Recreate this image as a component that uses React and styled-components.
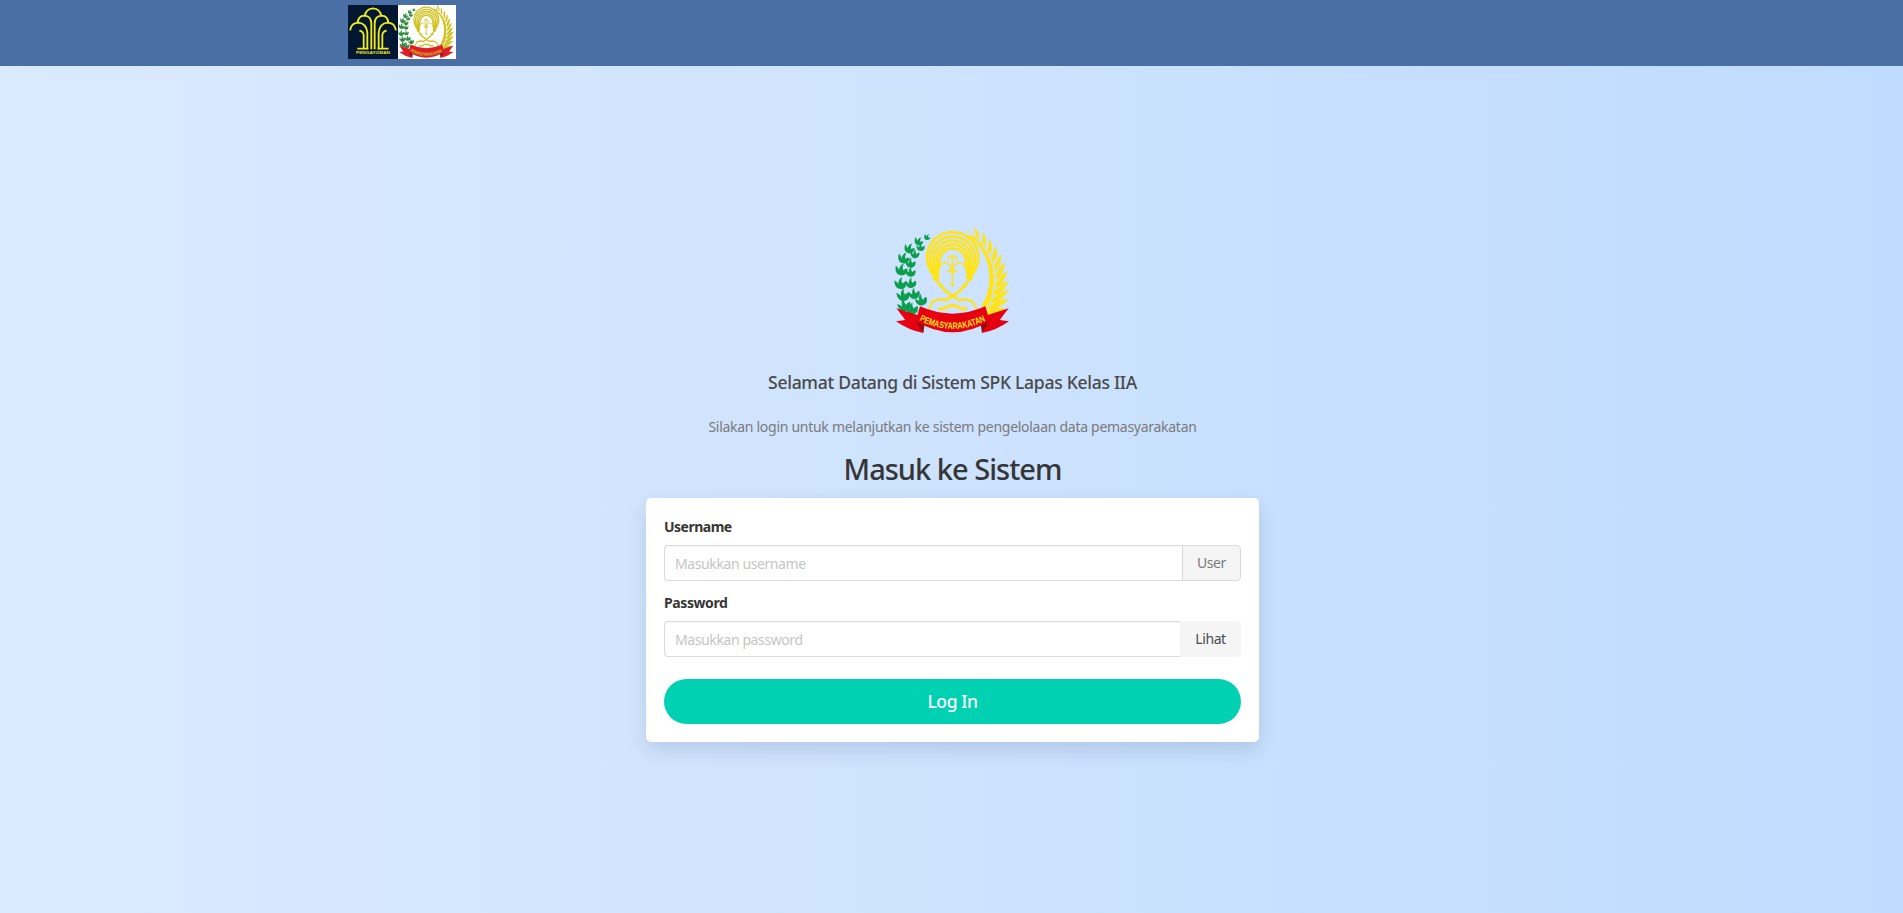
import React, { useState } from "react";
import styled, { createGlobalStyle } from "styled-components";

const GlobalStyle = createGlobalStyle`
  *, *::before, *::after { box-sizing: border-box; }
  body {
    margin: 0;
    font-family: "Noto Sans", "Open Sans", sans-serif;
    font-size: 14px;
    color: #4a4a4a;
  }
`;

const Page = styled.div`
  display: flex;
  flex-direction: column;
  height: 100vh;
  overflow: hidden;
  background: linear-gradient(to right, #dbeafe, #bfdbfe);
`;

const Navbar = styled.header`
  flex: none;
  height: 66px;
  padding-top: 5px;
  background: #4a6fa5;
`;

const NavContainer = styled.div`
  display: flex;
  width: 1207px;
  margin: 0 auto;
`;

const NavLogo = styled.div`
  display: flex;
  width: ${(p) => p.$width}px;
  height: 54px;
  background: ${(p) => p.$background};
  svg { display: block; width: 100%; height: 100%; }
`;

const Main = styled.main`
  display: flex;
  flex-direction: column;
  align-items: center;
  padding: 149px 0 0 2px;
`;

const EmblemFrame = styled.div`
  width: 145px;
  height: 130px;
  svg { display: block; width: 100%; height: 100%; }
`;

const Welcome = styled.p`
  margin: 24px 0 20px;
  font-size: 17.6px;
  font-weight: 550;
  line-height: 27px;
  letter-spacing: -0.32px;
`;

const Hint = styled.p`
  margin: 0 0 14px;
  line-height: 21px;
  letter-spacing: -0.28px;
  color: #7a7a7a;
`;

const Title = styled.h1`
  margin: 0 0 11px;
  font-size: 29px;
  font-weight: 550;
  line-height: 36px;
  letter-spacing: -0.98px;
  color: #363636;
`;

const Card = styled.form`
  width: 613px;
  padding: 18px;
  border-radius: 5px;
  background: #fff;
  box-shadow: 0 8px 20px rgba(10, 30, 70, 0.13);
`;

const Field = styled.div`
  margin-bottom: ${(p) => p.$gap}px;
`;

const Label = styled.label`
  display: block;
  margin-bottom: 8px;
  font-weight: 700;
  line-height: 21px;
  letter-spacing: ${(p) => p.$tracking}px;
  color: #363636;
`;

const InputGroup = styled.div`
  display: flex;
  height: 36px;
`;

const Input = styled.input`
  flex: 1;
  min-width: 0;
  padding: 1px 10px 0;
  border: 1px solid #dbdbdb;
  border-right: 0;
  border-radius: 4px 0 0 4px;
  background: #fff;
  box-shadow: inset 0 1px 2px rgba(10, 10, 10, 0.05);
  font: inherit;
  letter-spacing: -0.4px;
  color: #363636;
  outline: none;
  &::placeholder { color: #c5c5c5; opacity: 1; }
`;

const Addon = styled.span`
  display: flex;
  align-items: center;
  justify-content: center;
  width: 59px;
  padding-bottom: 1px;
  border: 1px solid #dbdbdb;
  border-radius: 0 4px 4px 0;
  background: #f5f5f5;
  letter-spacing: -0.4px;
  color: #7a7a7a;
`;

const RevealButton = styled.button`
  width: 61px;
  padding: 0 0 1px;
  border: 0;
  border-radius: 0 4px 4px 0;
  background: #f5f5f5;
  font: inherit;
  letter-spacing: -0.4px;
  color: #4a4a4a;
`;

const SubmitButton = styled.button`
  display: block;
  width: 100%;
  height: 45px;
  padding: 0 0 1px;
  border: 0;
  border-radius: 23px;
  background: #00d1b2;
  font: inherit;
  font-size: 17.5px;
  font-weight: 500;
  letter-spacing: -0.4px;
  color: #fff;
`;

/* Cotton leaves: x, y, rotation, scale */
const cotton = [
  [141, 66, 25, 0.6], [116, 79, 20, 0.8], [122, 97, -5, 0.75], [88, 101, 15, 0.95],
  [105, 118, -5, 0.8], [71, 130, 12, 1.05], [92, 145, -8, 0.9], [64, 165, 5, 1.1],
  [92, 172, -8, 0.9], [62, 206, -5, 1.1], [93, 205, -12, 0.95], [70, 241, -14, 1.15],
  [103, 237, -18, 1], [73, 272, -22, 1.15], [124, 256, -20, 1.05], [96, 282, -12, 1.1],
];

/* Rice grains, placed in pairs along the stem's curve */
const stem = [[300, 296], [360, 250], [365, 120], [274, 58]];
const bezier = (t, i) => {
  const u = 1 - t;
  return u * u * u * stem[0][i] + 3 * u * u * t * stem[1][i] + 3 * u * t * t * stem[2][i] + t * t * t * stem[3][i];
};
const grains = Array.from({ length: 11 }, (_, n) => {
  const t = 0.02 + n * 0.09;
  const x = bezier(t, 0);
  const y = bezier(t, 1);
  const angle = (Math.atan2(bezier(t + 0.01, 1) - y, bezier(t + 0.01, 0) - x) * 180) / Math.PI;
  return { x, y, angle, scale: 1.2 - t * 0.65 };
});

/* Half-width and top of each arch of the banyan crown */
const ribs = [[77, 51], [67, 64], [57.5, 77], [48.5, 89], [40, 100]];

function Emblem({ id, viewBox, gold, green, red }) {
  return (
    <svg viewBox={viewBox} preserveAspectRatio="none" role="img" aria-label="Pemasyarakatan">
      <g fill={green}>
        {cotton.map(([x, y, r, s]) => (
          <path
            key={`${x}-${y}`}
            transform={`translate(${x} ${y}) rotate(${r}) scale(${s})`}
            d="M-16 -11 Q-10 -6 -6 0 Q-6 -12 5 -18 Q1 -8 5 0 Q10 -5 17 -5 Q17 9 8 13 Q0 17 -9 12 Q-18 5 -16 -11Z"
          />
        ))}
      </g>

      <g fill={gold}>
        {grains.map(({ x, y, angle, scale }) => (
          <g key={x + y} transform={`translate(${x} ${y}) rotate(${angle}) scale(${scale})`}>
            <path d="M-2 2 Q2 25 54 36 Q40 10 -2 2Z" />
            <path d="M2 -1 Q14 -23 54 -21 Q38 -2 2 -1Z" />
          </g>
        ))}
      </g>
      <path d="M296 300 Q361 245 347 165 Q336 95 262 46" fill="none" stroke={gold} strokeWidth="2.5" />

      <g fill="none" stroke={gold} strokeWidth="8">
        {ribs.map(([w, top], i) => {
          const cy = top + w;
          const end = 50 - i * 2;
          return (
            <path
              key={w}
              d={`M${218 - end} 190 C${218 - end - 8} 180 ${218 - w} ${cy + 32 - i * 3} ${218 - w} ${cy} A${w} ${w} 0 0 1 ${218 + w} ${cy} C${218 + w} ${cy + 32 - i * 3} ${218 + end + 8} 180 ${218 + end} 190`}
            />
          );
        })}
      </g>
      <g fill={gold}>
        <circle cx="166" cy="190" r="8" />
        <circle cx="270" cy="190" r="8" />
        <circle cx="183" cy="213" r="6" />
        <circle cx="253" cy="213" r="6" />
        <circle cx="217" cy="210" r="5.5" />
      </g>
      <g fill="none" stroke={gold} strokeLinecap="round">
        <path
          d="M168 192 Q190 232 240 256 Q256 248 278 260 M268 192 Q246 232 196 256 Q180 248 158 260"
          strokeWidth="8"
        />
        <path d="M158 260 L142 292 M278 260 L296 292" strokeWidth="6" strokeLinecap="butt" />
        <path d="M174 281 H192 Q218 262 244 281 H262" strokeWidth="9" strokeLinecap="butt" />
        <path d="M176 164 Q180 143 196 144 Q211 145 217 167 M258 164 Q254 143 238 144 Q223 145 217 167" strokeWidth="4.5" />
        <path d="M204 136 Q202 123 217 123 Q232 123 230 136" strokeWidth="4.5" />
        <path d="M217 124 V207" strokeWidth="5" />
        <path d="M204 169 H230" strokeWidth="6" />
      </g>

      <g fill={red}>
        <path d="M49 280 L122 303 L130 354 Q86 346 48 319 L76 315Z" />
        <path d="M386 280 L314 303 L306 354 Q350 346 387 319 L359 315Z" />
      </g>
      <path d="M107 316 L130 354 L134 326Z M329 316 L306 354 L302 326Z" fill="#8d1016" />
      <path d="M120 274 Q218 318 316 274 L329 318 Q218 386 107 318Z" fill={red} />
      <path id={id} d="M114 314 Q218 370 326 313" fill="none" />
      <text fill={gold} fontFamily="'Liberation Sans', sans-serif" fontSize="28" fontWeight="700">
        <textPath href={`#${id}`} startOffset="4" textLength="208" lengthAdjust="spacingAndGlyphs">
          PEMASYARAKATAN
        </textPath>
      </text>
    </svg>
  );
}

function PengayomanLogo() {
  return (
    <svg viewBox="0 0 150 162" role="img" aria-label="Pengayoman">
      <g fill="none" stroke="#f0ec1c" strokeWidth="5.5">
        <path d="M50 34 Q53 11 75 10 Q97 11 100 34" />
        <path d="M29 55 Q30 32 49 32 Q69 33 70 55 V133" />
        <path d="M121 55 Q120 32 101 32 Q81 33 80 55 V133" />
        <path d="M6 76 Q10 53 32 53 Q54 55 58 82 V133" />
        <path d="M144 76 Q140 53 118 53 Q96 55 92 82 V133" />
        <path d="M28 131 H61 M89 131 H122" />
        <path d="M47 131 V90 Q46 79 34 77 M103 131 V90 Q104 79 116 77" />
      </g>
      <text
        x="24" y="147" textLength="102" lengthAdjust="spacingAndGlyphs"
        fill="#f0ec1c" fontFamily="'Liberation Sans', sans-serif" fontSize="13" fontWeight="700"
      >
        PENGAYOMAN
      </text>
    </svg>
  );
}

export default function App() {
  const [visible, setVisible] = useState(false);

  return (
    <>
      <GlobalStyle />
      <Page>
        <Navbar>
          <NavContainer>
            <NavLogo $width={50} $background="#031632">
              <PengayomanLogo />
            </NavLogo>
            <NavLogo $width={58} $background="#fff">
              <Emblem id="nav-ribbon" viewBox="42 38 360 322" gold="#cfc21f" green="#2f8a3e" red="#dc1f26" />
            </NavLogo>
          </NavContainer>
        </Navbar>
        <Main>
          <EmblemFrame>
            <Emblem id="main-ribbon" viewBox="0 0 435 390" gold="#ffe41c" green="#0a9f4c" red="#e60012" />
          </EmblemFrame>
          <Welcome>Selamat Datang di Sistem SPK Lapas Kelas IIA</Welcome>
          <Hint>Silakan login untuk melanjutkan ke sistem pengelolaan data pemasyarakatan</Hint>
          <Title>Masuk ke Sistem</Title>
          <Card onSubmit={(e) => e.preventDefault()}>
            <Field $gap={11}>
              <Label htmlFor="username" $tracking={-0.5}>Username</Label>
              <InputGroup>
                <Input id="username" placeholder="Masukkan username" />
                <Addon>User</Addon>
              </InputGroup>
            </Field>
            <Field $gap={22}>
              <Label htmlFor="password" $tracking={-0.4}>Password</Label>
              <InputGroup>
                <Input id="password" type={visible ? "text" : "password"} placeholder="Masukkan password" />
                <RevealButton type="button" onClick={() => setVisible(!visible)}>Lihat</RevealButton>
              </InputGroup>
            </Field>
            <SubmitButton type="submit">Log In</SubmitButton>
          </Card>
        </Main>
      </Page>
    </>
  );
}
